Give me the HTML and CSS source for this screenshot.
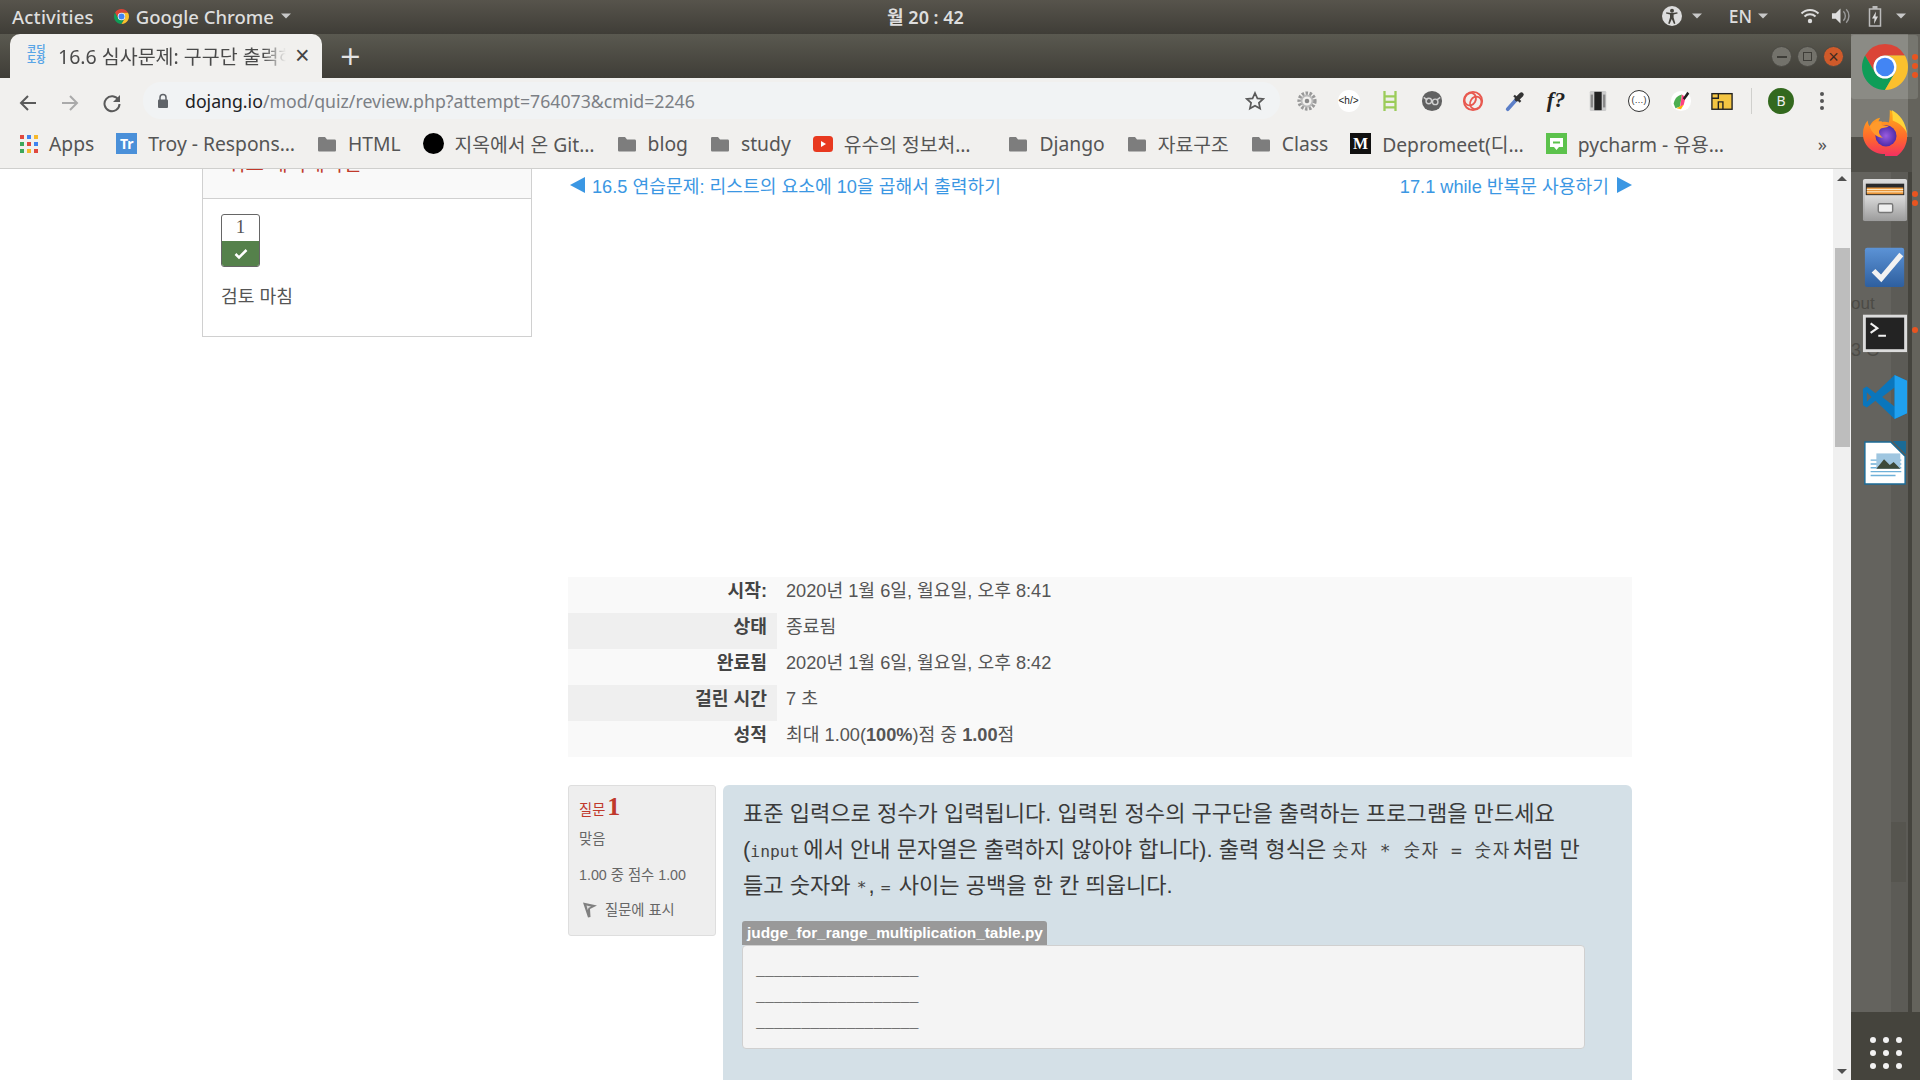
FILE: index.html
```html
<!DOCTYPE html>
<html lang="ko">
<head>
    <meta charset="UTF-8">
    <title>16.6 심사문제: 구구단 출력하기</title>
    <link rel="stylesheet" href="styles.css">
</head>
<body>

<svg class="defs" width="0" height="0">
    <symbol id="chrome" viewBox="4 4 40 40">
        <path fill="#db4437" d="M24 4A20 20 0 0 1 41.32 14H24A10 10 0 0 0 15.34 29L6.68 14A20 20 0 0 1 24 4Z"/>
        <path fill="#0f9d58" d="M6.68 14A20 20 0 0 0 24 44L32.66 29A10 10 0 0 1 15.34 29Z"/>
        <path fill="#fbc02d" d="M41.32 14A20 20 0 0 1 24 44L32.66 29A10 10 0 0 0 24 14Z"/>
        <circle cx="24" cy="24" r="10" fill="#fff"/>
        <circle cx="24" cy="24" r="8" fill="#4285f4"/>
    </symbol>
    <symbol id="folder" viewBox="0 0 20 18">
        <path fill="#7d7d7d" d="M1 3.500C1 2.400 1.600 2 2.500 2H8l2 2.500h7.500c1 0 1.500.6 1.500 1.500v9c0 1-.5 1.500-1.500 1.500h-15C1.500 16.500 1 16 1 15Z"/>
    </symbol>
    <symbol id="caret" viewBox="0 0 10 6">
        <path fill="currentColor" d="M0 .5h10L5 5.500Z"/>
    </symbol>
</svg>

<header class="topbar">
    <div class="topbar-left">
        <span class="activities">Activities</span>
        <span class="app-menu">
            <svg class="app-chrome"><use href="#chrome"/></svg>
            Google Chrome
            <svg class="caret"><use href="#caret"/></svg>
        </span>
    </div>
    <div class="clock">월 20 : 42</div>
    <div class="tray">
        <svg class="tray-access" viewBox="0 0 20 20"><circle cx="10" cy="10" r="10" fill="#ddd"/><circle cx="10" cy="4.800" r="2" fill="#44423c"/><path fill="#44423c" d="M4 7.500l4 1v3l-1.800 6 1.400.5 2.200-5 2.200 5 1.400-.5-1.800-6v-3l4-1-.3-1.300-4.500.8H8.800l-4.500-.8Z"/></svg>
        <svg class="caret tray-caret-a"><use href="#caret"/></svg>
        <span class="lang">EN</span>
        <svg class="caret tray-caret-b"><use href="#caret"/></svg>
        <svg class="tray-wifi" viewBox="0 0 20 16"><path fill="none" stroke="#ddd" stroke-width="2" d="M1.500 5.500a12 12 0 0 1 17 0M4.500 8.500a8 8 0 0 1 11 0"/><circle cx="10" cy="13" r="2.200" fill="#ddd"/></svg>
        <svg class="tray-vol" viewBox="0 0 20 18"><path fill="#ddd" d="M1 6h4l5-5v16l-5-5H1Z"/><path fill="none" stroke="#999" stroke-width="1.500" d="M13 4a7 7 0 0 1 0 10M16 2a10 10 0 0 1 0 14"/></svg>
        <svg class="tray-batt" viewBox="0 0 14 22"><path fill="none" stroke="#bbb" stroke-width="1.500" d="M1.500 4h11v17h-11Z"/><path fill="#bbb" d="M4.500 1h5v3h-5Z"/><path fill="#ddd" d="M8 6.500l-4 7h2.500L6 19l4-7.500H7.500Z"/></svg>
        <svg class="caret tray-caret-c"><use href="#caret"/></svg>
    </div>
</header>

<div class="workspace">
    <div class="window">
        <div class="tabstrip">
            <div class="tab">
                <span class="favicon">코딩<br>도장</span>
                <span class="tab-title">16.6 심사문제: 구구단 출력하기</span>
                <span class="tab-close">×</span>
            </div>
            <span class="tab-new">+</span>
            <div class="win-buttons">
                <span class="win-btn"><i class="win-min"></i></span>
                <span class="win-btn"><i class="win-max"></i></span>
                <span class="win-btn win-close">×</span>
            </div>
        </div>

        <div class="toolbar">
            <svg class="nav-icon" viewBox="0 0 20 20"><path fill="none" stroke="#5a5a5a" stroke-width="2" d="M18 10H3M10 3l-7 7 7 7"/></svg>
            <svg class="nav-icon" viewBox="0 0 20 20"><path fill="none" stroke="#aaa" stroke-width="2" d="M2 10h15M10 3l7 7-7 7"/></svg>
            <svg class="nav-icon" viewBox="0 0 20 20"><path fill="none" stroke="#5a5a5a" stroke-width="2" d="M16.500 7A7.500 7.500 0 1 0 17.500 11"/><path fill="#5a5a5a" d="M18 2v7h-7Z"/></svg>
            <div class="omnibox">
                <svg class="lock" viewBox="0 0 12 16"><path fill="none" stroke="#5f6368" stroke-width="1.500" d="M3 7V4.500a3 3 0 0 1 6 0V7"/><rect x="1" y="6.500" width="10" height="8.500" rx="1" fill="#5f6368"/></svg>
                <span class="url"><b>dojang.io</b>/mod/quiz/review.php?attempt=764073&amp;cmid=2246</span>
                <svg class="star" viewBox="0 0 20 20"><path fill="none" stroke="#5a5a5a" stroke-width="1.700" d="M10 2l2.400 5.400 5.800.6-4.300 3.900 1.200 5.700L10 14.700l-5.100 2.900 1.200-5.700L1.800 8l5.800-.6Z"/></svg>
            </div>
            <div class="extensions">
                <svg viewBox="0 0 24 24"><circle cx="12" cy="12" r="8" fill="none" stroke="#999" stroke-width="5" stroke-dasharray="2.500 1.500"/><circle cx="12" cy="12" r="6" fill="none" stroke="#bbb" stroke-width="2"/><circle cx="12" cy="12" r="2.500" fill="#888"/></svg>
                <span class="ext-ch">&lt;h/&gt;</span>
                <svg viewBox="0 0 24 24"><path fill="none" stroke="#9ccc5a" stroke-width="2.500" d="M6 1v22M18 1v22M6 7h12M6 13h12M6 19h12"/></svg>
                <svg viewBox="0 0 24 24"><circle cx="12" cy="12" r="11" fill="#616161"/><path fill="none" stroke="#d0d0d0" stroke-width="1.500" d="M3 8l4 3M21 8l-4 3"/><circle cx="8.500" cy="12" r="3" fill="none" stroke="#d0d0d0" stroke-width="1.500"/><circle cx="15.500" cy="13" r="3" fill="none" stroke="#d0d0d0" stroke-width="1.500"/></svg>
                <svg viewBox="0 0 24 24"><g fill="none" stroke="#e8594f" stroke-width="2"><circle cx="12" cy="12" r="10"/><ellipse cx="9" cy="10" rx="6" ry="7" transform="rotate(30 9 10)"/><ellipse cx="15" cy="14" rx="6" ry="7" transform="rotate(30 15 14)"/></g></svg>
                <svg viewBox="0 0 24 24"><path stroke="#5c7fc8" stroke-width="4" stroke-linecap="round" d="M4 21L13 11"/><path stroke="#333" stroke-width="5" stroke-linecap="round" d="M14 10L19 5"/><path stroke="#333" stroke-width="2.500" d="M11 6l7 7"/></svg>
                <span class="ext-f">f?</span>
                <svg viewBox="0 0 24 24"><rect x="3" y="1" width="18" height="22" rx="1.500" fill="#ccc"/><rect x="8" y="2" width="8" height="20" fill="#222"/><rect x="4" y="5" width="2.500" height="14" fill="#888"/><rect x="17.500" y="5" width="2.500" height="14" fill="#888"/></svg>
                <span class="ext-dots">(…)</span>
                <svg viewBox="0 0 24 24"><circle cx="12" cy="12" r="11" fill="#fff"/><path fill="#4caf50" d="M4 15C5 9 9 6 13 5l-2 13-5 2Z"/><path fill="#ff4081" d="M11 19L13 5l4 3-2 8Z"/><path fill="#ffb300" d="M7 20l8-4-3 5Z"/><path fill="#222" d="M14 9l5-7 2 2-5 7Z"/></svg>
                <svg viewBox="0 0 24 24"><rect x="1" y="4" width="22" height="17" fill="#f4c542" stroke="#222" stroke-width="1.500"/><path fill="none" stroke="#222" stroke-width="1.500" d="M1 9h7V4M8 21v-8h5v8"/></svg>
            </div>
            <i class="tool-sep"></i>
            <span class="avatar">B</span>
            <span class="kebab"><i></i><i></i><i></i></span>
        </div>

        <div class="bookmarks">
            <span class="bm">
                <span class="apps-grid"><i class="c-r"></i><i class="c-b"></i><i class="c-y"></i><i class="c-g"></i><i class="c-r"></i><i class="c-b"></i><i class="c-g"></i><i class="c-y"></i><i class="c-r"></i></span>
                Apps
            </span>
            <span class="bm"><span class="bm-tr">Tr</span>Troy - Respons…</span>
            <span class="bm"><svg class="bm-folder"><use href="#folder"/></svg>HTML</span>
            <span class="bm"><i class="bm-circle"></i>지옥에서 온 Git…</span>
            <span class="bm"><svg class="bm-folder"><use href="#folder"/></svg>blog</span>
            <span class="bm"><svg class="bm-folder"><use href="#folder"/></svg>study</span>
            <span class="bm bm-wide">
                <svg class="bm-yt" viewBox="0 0 20 16"><rect width="20" height="16" rx="3.500" fill="#e8391f"/><path fill="#fff" d="M8 5l5 3-5 3Z"/></svg>
                유수의 정보처…
            </span>
            <span class="bm"><svg class="bm-folder"><use href="#folder"/></svg>Django</span>
            <span class="bm"><svg class="bm-folder"><use href="#folder"/></svg>자료구조</span>
            <span class="bm"><svg class="bm-folder"><use href="#folder"/></svg>Class</span>
            <span class="bm"><span class="bm-m">M</span>Depromeet(디…</span>
            <span class="bm">
                <svg class="bm-blog" viewBox="0 0 21 21"><rect width="21" height="21" fill="#5cc24c"/><path fill="#fff" d="M4 5h13v9h-4l-2.500 3-2.500-3H4Z"/><rect x="7" y="8.500" width="7" height="2" fill="#5cc24c"/></svg>
                pycharm - 유용…
            </span>
            <span class="bm-more">»</span>
        </div>

        <div class="page">
            <div class="page-body">
                <aside class="quiz-nav">
                    <div class="quiz-nav-head">퀴즈 네비게이션</div>
                    <div class="quiz-nav-body">
                        <div class="qn-button">
                            <span class="qn-num">1</span>
                            <span class="qn-state"><svg viewBox="0 0 14 12"><path fill="none" stroke="#fff" stroke-width="2.500" d="M1.500 6l3.500 3.500 7.500-7.500"/></svg></span>
                        </div>
                        <p class="qn-finish">검토 마침</p>
                    </div>
                </aside>

                <main class="content">
                    <nav class="lesson-nav">
                        <a class="lesson-link"><i class="tri-left"></i>16.5 연습문제: 리스트의 요소에 10을 곱해서 출력하기</a>
                        <a class="lesson-link">17.1 while 반복문 사용하기<i class="tri-right"></i></a>
                    </nav>

                    <table class="summary">
                        <tr><th>시작:</th><td>2020년 1월 6일, 월요일, 오후 8:41</td></tr>
                        <tr class="alt"><th>상태</th><td>종료됨</td></tr>
                        <tr><th>완료됨</th><td>2020년 1월 6일, 월요일, 오후 8:42</td></tr>
                        <tr class="alt"><th>걸린 시간</th><td>7 초</td></tr>
                        <tr><th>성적</th><td>최대 1.00(<b>100%</b>)점 중 <b>1.00</b>점</td></tr>
                    </table>

                    <section class="question">
                        <div class="q-info">
                            <h3 class="q-no">질문 <span>1</span></h3>
                            <div class="q-line">맞음</div>
                            <div class="q-line">1.00 중 점수 1.00</div>
                            <div class="q-flag">
                                <svg viewBox="0 0 16 18"><path fill="#808080" d="M1 2.500l14 3-7 3.500.5 8-2.500.5Z"/><path fill="#ddd" d="M4.500 5.500l4.500 1-2.500 1.500-.8 2Z"/></svg>
                                질문에 표시
                            </div>
                        </div>
                        <div class="q-content">
                            <p class="q-text">표준 입력으로 정수가 입력됩니다. 입력된 정수의 구구단을 출력하는 프로그램을 만드세요 (<code>input</code>에서 안내 문자열은 출력하지 않아야 합니다). 출력 형식은 <code class="code-ko">숫자 * 숫자 = 숫자</code>처럼 만들고 숫자와 <code class="code-sign">*</code>, <code class="code-sign">=</code> 사이는 공백을 한 칸 띄웁니다.</p>
                            <div class="code-label">judge_for_range_multiplication_table.py</div>
                            <pre class="code-box">__________________
__________________
__________________</pre>
                        </div>
                    </section>
                </main>
            </div>

            <div class="scrollbar">
                <i class="sb-up"></i>
                <i class="sb-thumb"></i>
                <i class="sb-down"></i>
            </div>
        </div>
    </div>

    <div class="dock">
        <div class="dock-ghost">
            <span class="ghost-out">out</span>
            <span class="ghost-3">3 O</span>
            <i class="ghost-scroll"></i>
        </div>
        <i class="dock-active"></i>
        <span class="pip pip-c1"></span><span class="pip pip-c2"></span><span class="pip pip-c3"></span>
        <span class="pip pip-f1"></span><span class="pip pip-f2"></span>
        <span class="pip pip-t1"></span>

        <div class="dock-items">
            <svg class="dock-icon"><use href="#chrome"/></svg>

            <svg class="dock-icon" viewBox="0 1 48 48">
                <defs>
                    <linearGradient id="ffBody" x1="0" y1="0" x2="0" y2="1"><stop offset="0" stop-color="#ffb31a"/><stop offset=".55" stop-color="#ff6a2b"/><stop offset="1" stop-color="#f0246c"/></linearGradient>
                    <radialGradient id="ffGlobe"><stop offset="0" stop-color="#9a5ce0"/><stop offset="1" stop-color="#4e2ca8"/></radialGradient>
                </defs>
                <path fill="url(#ffBody)" d="M24 47C10 47 1 37 1 26c0-6 2-11 5-14 0 3 1 5 2 6 2-5 6-8 11-9-2 3-2 5-1 6 3-2 7-2 10-1 1-4 1-9 1-13 8 4 17 13 18 26 1 14-10 26-23 26Z"/>
                <path fill="#ffd43a" d="M31 1c8 4 15 13 16 25-2-6-7-11-15-14 0-4 0-7-1-11Z"/>
                <circle cx="25" cy="28" r="11" fill="url(#ffGlobe)"/>
                <path fill="#ff9a2b" d="M8 18c3-4 8-6 13-5-1 2-1 3 0 4l7 1c-3 2-7 1-9 3-3 3 0 7 3 9-6 0-12-5-14-12Z"/>
            </svg>

            <svg class="dock-icon" viewBox="0 -2 48 48">
                <defs><linearGradient id="cab" x1="0" y1="0" x2="0" y2="1"><stop offset="0" stop-color="#dcdcdc"/><stop offset="1" stop-color="#9b9b9b"/></linearGradient></defs>
                <rect x="1" y="1" width="46" height="44" rx="2" fill="url(#cab)"/>
                <rect x="4" y="6" width="40" height="14" fill="#2a2a2a"/>
                <rect x="5" y="10" width="38" height="7" fill="#e9963a"/>
                <path stroke="#fff3d8" d="M5 12h38M5 14.500h38"/>
                <rect x="3" y="18" width="42" height="27" fill="url(#cab)"/>
                <rect x="17" y="27" width="15" height="9" rx="1.500" fill="#efefef" stroke="#777" stroke-width="1.500"/>
            </svg>

            <svg class="dock-icon" viewBox="0 -3 48 48">
                <defs><linearGradient id="tasks" x1="0" y1="0" x2="0" y2="1"><stop offset="0" stop-color="#5c93d6"/><stop offset="1" stop-color="#2e5f9f"/></linearGradient></defs>
                <rect x="3" y="3" width="41" height="41" rx="2.500" fill="url(#tasks)"/>
                <path fill="none" stroke="#f2f2f2" stroke-width="5.500" d="M12 27l8 8L41 10"/>
            </svg>

            <svg class="dock-icon" viewBox="0 -4 48 48">
                <rect x="1" y="3" width="46" height="39" fill="#dcdcdc"/>
                <rect x="4" y="6" width="40" height="33" fill="#232323"/>
                <path fill="none" stroke="#f2f2f2" stroke-width="2.200" d="M9 12l7 5-7 5M17 25h8"/>
            </svg>

            <svg class="dock-icon" viewBox="0 0 48 48">
                <path fill="#0a76bd" d="M34 1L14 20 5 13 1 15.500v17L5 35l9-7 20 19 13-6V7ZM34 14v20l-13-10ZM5 19l5 5-5 5Z"/>
                <path fill="#1fa0ef" d="M34 1l13 6v34l-13 6Z"/>
            </svg>

            <svg class="dock-icon" viewBox="0 0 48 48">
                <path fill="#fff" stroke="#1b6b96" stroke-width="1.500" d="M3 2h27l15 15v29H3Z"/>
                <path fill="#1b6b96" d="M32 1h14v14Z"/>
                <path stroke="#6eb0d8" stroke-width="1.500" d="M9 21h32M9 25h32M9 29h32M9 33h32M9 37h26"/>
                <rect x="15" y="14" width="25" height="16" fill="#9fc6e0"/>
                <path fill="#3d4a3a" d="M15 30l8-10 6 6 4-3 7 7Z"/>
            </svg>
        </div>

        <div class="dock-foot">
            <div class="show-apps"><i></i><i></i><i></i><i></i><i></i><i></i><i></i><i></i><i></i></div>
        </div>
    </div>
</div>

</body>
</html>
```

FILE: styles.css
```css
* {
    box-sizing: border-box;
}

html, body {
    margin: 0;
    height: 100%;
    overflow: hidden;
}

body {
    font-family: 'Liberation Sans', 'Noto Sans CJK KR', sans-serif;
    color: #444;
    background-color: #fff;
}

.defs {
    position: absolute;
}

.caret {
    width: 10px;
    height: 6px;
    color: #c8c8c8;
}

/* top bar */
.topbar {
    height: 34px;
    display: grid;
    grid-template-columns: 1fr auto 1fr;
    align-items: center;
    padding-right: 69px;
    padding-bottom: 2px;
    background: linear-gradient(#57544c, #3f3d37);
    color: #dedede;
    font-family: 'Noto Sans', 'Noto Sans CJK KR', sans-serif;
    font-size: 18.500px;
    font-weight: 500;
}

.topbar-left {
    display: flex;
    align-items: center;
    padding-left: 12px;
}

.activities {
    margin-right: 20px;
    letter-spacing: 0.2px;
}

.app-menu {
    display: flex;
    align-items: center;
}

.app-chrome {
    width: 15px;
    height: 15px;
    margin-right: 7px;
}

.app-menu .caret {
    margin-left: 7px;
}

.clock {
    font-size: 18px;
    font-weight: 600;
}

.tray {
    display: flex;
    align-items: center;
    justify-content: flex-end;
    margin-right: -69px;
    padding-right: 14px;
}

.tray-access {
    width: 20px;
    height: 20px;
}

.tray-caret-a {
    margin-left: 10px;
}

.lang {
    margin-left: 27px;
    font-size: 17.500px;
}

.tray-caret-b {
    margin-left: 6px;
}

.tray-wifi {
    width: 20px;
    height: 16px;
    margin-left: 32px;
}

.tray-vol {
    width: 19px;
    height: 18px;
    margin-left: 11px;
}

.tray-batt {
    width: 14px;
    height: 22px;
    margin-left: 18px;
}

.tray-caret-c {
    margin-left: 14px;
}

/* window */
.workspace {
    display: flex;
    height: 1046px;
}

.window {
    width: 1851px;
    display: flex;
    flex-direction: column;
}

.tabstrip {
    height: 44px;
    display: flex;
    align-items: flex-end;
    padding-left: 10px;
    background: linear-gradient(#5a5950, #3f3d37);
}

.tab {
    width: 312px;
    height: 44px;
    display: flex;
    align-items: center;
    padding-left: 17px;
    padding-bottom: 2px;
    background-color: #f1f0ee;
    border-radius: 10px 10px 0 0;
}

.favicon {
    width: 20px;
    font-size: 10px;
    line-height: 10px;
    font-weight: 700;
    color: #5aa5e6;
    margin-right: 11px;
}

.tab-title {
    width: 228px;
    white-space: nowrap;
    overflow: hidden;
    font-size: 19.500px;
    color: #4a4a4a;
    font-family: 'Noto Sans', 'Noto Sans CJK KR', sans-serif;
    -webkit-mask-image: linear-gradient(to right, #000 90%, transparent);
    mask-image: linear-gradient(to right, #000 90%, transparent);
}

.tab-close {
    margin-left: 9px;
    font-size: 25px;
    color: #444;
}

.tab-new {
    align-self: center;
    margin-left: 17px;
    font-size: 27px;
    line-height: 30px;
    color: #e4e4e4;
    font-family: 'DejaVu Sans', sans-serif;
}

.win-buttons {
    margin-left: auto;
    margin-right: 7px;
    margin-bottom: 11px;
    display: flex;
    gap: 5px;
}

.win-btn {
    width: 21px;
    height: 21px;
    border-radius: 50%;
    display: flex;
    align-items: center;
    justify-content: center;
    background-color: #73726b;
    border: 1px solid #4a4943;
}

.win-min {
    width: 10px;
    height: 2px;
    background-color: #3e3d38;
}

.win-max {
    width: 9px;
    height: 9px;
    border: 1px solid #3e3d38;
}

.win-close {
    background-color: #cf5a2a;
    color: #3e2a20;
    font-size: 18px;
    line-height: 18px;
}

.toolbar {
    height: 50px;
    display: flex;
    align-items: center;
    padding-left: 18px;
    background-color: #f1f0ee;
}

.nav-icon {
    width: 20px;
    height: 20px;
    margin-right: 22px;
}

.omnibox {
    width: 1137px;
    height: 37px;
    margin-left: -1px;
    margin-top: -5px;
    display: flex;
    align-items: center;
    padding-left: 14px;
    padding-right: 15px;
    background-color: #f1f3f4;
    border-radius: 18px;
}

.lock {
    width: 12px;
    height: 16px;
    margin-right: 16px;
}

.url {
    font-family: 'Noto Sans', sans-serif;
    font-size: 17.700px;
    color: #7c8085;
}

.url b {
    font-weight: 400;
    color: #202124;
}

.star {
    width: 20px;
    height: 20px;
    margin-left: auto;
}

.extensions {
    display: flex;
    align-items: center;
    gap: 19.500px;
    margin-left: 16px;
    margin-top: -5px;
}

.extensions svg,
.extensions span {
    width: 22px;
    height: 22px;
    flex: none;
}

.ext-ch {
    background-color: #fff;
    border-radius: 50%;
    color: #222;
    font-size: 10px;
    line-height: 22px;
    text-align: center;
    white-space: nowrap;
}

.ext-f {
    font-family: 'Liberation Serif', serif;
    font-style: italic;
    font-weight: 700;
    font-size: 22px;
    line-height: 20px;
    color: #222;
    text-align: center;
}

.ext-dots {
    border: 1.500px solid #333;
    border-radius: 50%;
    font-size: 9px;
    line-height: 18px;
    text-align: center;
    color: #333;
    background-color: #fff;
}

.tool-sep {
    width: 1px;
    height: 26px;
    margin-left: 18px;
    margin-top: -5px;
    background-color: #d0d0cd;
}

.avatar {
    width: 26px;
    height: 26px;
    margin-left: 16px;
    margin-top: -5px;
    border-radius: 50%;
    background-color: #33691e;
    color: #eee;
    font-family: 'Noto Sans', sans-serif;
    font-size: 14px;
    line-height: 26px;
    text-align: center;
}

.kebab {
    margin-left: 26px;
    margin-top: -5px;
    display: flex;
    flex-direction: column;
    gap: 3px;
}

.kebab i {
    width: 4px;
    height: 4px;
    border-radius: 50%;
    background-color: #555;
}

/* bookmarks */
.bookmarks {
    height: 41px;
    display: flex;
    align-items: center;
    gap: 22px;
    padding-left: 20px;
    padding-bottom: 9px;
    background-color: #f1f0ee;
    border-bottom: 1px solid #cfcfcd;
    font-family: 'Noto Sans', 'Noto Sans CJK KR', sans-serif;
    font-size: 19.300px;
    color: #555;
    white-space: nowrap;
}

.bm {
    display: flex;
    align-items: center;
    gap: 11px;
}

.bm-wide {
    margin-right: 16px;
}

.apps-grid {
    width: 18px;
    height: 18px;
    display: grid;
    grid-template-columns: repeat(3, 4px);
    gap: 3px;
}

.apps-grid i {
    width: 4px;
    height: 4px;
}

.c-r { background-color: #e0493f; }
.c-b { background-color: #3f82ef; }
.c-y { background-color: #f7b92b; }
.c-g { background-color: #3da75a; }

.bm-tr {
    width: 21px;
    height: 21px;
    background-color: #4a90d9;
    color: #fff;
    font-weight: 700;
    font-size: 14px;
    line-height: 21px;
    text-align: center;
}

.bm-folder {
    width: 20px;
    height: 18px;
}

.bm-circle {
    width: 21px;
    height: 21px;
    border-radius: 50%;
    background-color: #000;
}

.bm-yt {
    width: 20px;
    height: 16px;
}

.bm-m {
    width: 21px;
    height: 21px;
    background-color: #111;
    color: #fff;
    font-family: 'Liberation Serif', serif;
    font-weight: 700;
    font-size: 16px;
    line-height: 21px;
    text-align: center;
}

.bm-blog {
    width: 21px;
    height: 21px;
}

.bm-more {
    margin-left: auto;
    margin-right: 24px;
    font-size: 18px;
}

/* page */
.page {
    flex: 1;
    min-height: 0;
    display: flex;
    overflow: hidden;
    background-color: #fff;
}

.page-body {
    width: 1833px;
    display: flex;
    align-items: flex-start;
    padding-left: 202px;
}

.scrollbar {
    width: 18px;
    position: relative;
    background-color: #f0f0f0;
}

.sb-thumb {
    position: absolute;
    left: 2px;
    top: 79px;
    width: 15px;
    height: 199px;
    background-color: #bdbdbd;
}

.sb-up,
.sb-down {
    position: absolute;
    left: 4px;
    border-left: 5px solid transparent;
    border-right: 5px solid transparent;
}

.sb-up {
    top: 7px;
    border-bottom: 5px solid #505050;
}

.sb-down {
    bottom: 6px;
    border-top: 5px solid #505050;
}

.quiz-nav {
    width: 330px;
    flex: none;
    margin-top: -36px;
    border: 1px solid #d0d0d0;
    border-top: 0;
}

.quiz-nav-head {
    height: 66px;
    padding: 21px 0 0 24px;
    background-color: #f9f9f9;
    border-bottom: 1px solid #d0d0d0;
    color: #c0392b;
    font-size: 20px;
    line-height: 20px;
}

.quiz-nav-body {
    padding: 15px 0 0 18px;
    height: 137px;
}

.qn-button {
    width: 39px;
    height: 53px;
    border: 1px solid #666;
    border-radius: 3px;
    overflow: hidden;
}

.qn-num {
    display: block;
    height: 26px;
    text-align: center;
    font-family: 'Liberation Serif', serif;
    font-size: 19px;
    line-height: 24px;
    color: #555;
}

.qn-state {
    height: 26px;
    display: flex;
    align-items: center;
    justify-content: center;
    background-color: #55814b;
}

.qn-state svg {
    width: 14px;
    height: 12px;
}

.qn-finish {
    margin: 18px 0 0;
    font-size: 18.200px;
    line-height: 24px;
    color: #555;
}

.content {
    width: 1064px;
    flex: none;
    margin-left: 36px;
}

.lesson-nav {
    height: 32px;
    display: flex;
    justify-content: space-between;
    align-items: center;
}

.lesson-link {
    display: flex;
    align-items: center;
    font-size: 18.200px;
    color: #3b97e3;
}

.tri-left {
    margin: 0 7px 0 2px;
    border-top: 8px solid transparent;
    border-bottom: 8px solid transparent;
    border-right: 15px solid #3b97e3;
}

.tri-right {
    margin-left: 8px;
    border-top: 8px solid transparent;
    border-bottom: 8px solid transparent;
    border-left: 15px solid #3b97e3;
}

.summary {
    width: 1064px;
    margin-top: 376px;
    border-collapse: collapse;
    font-size: 18.200px;
    line-height: 28px;
    color: #555;
    background-color: #f9f9f9;
}

.summary th,
.summary td {
    height: 36px;
    padding: 0 0 8px 9px;
    vertical-align: top;
}

.summary th {
    width: 209px;
    padding-left: 0;
    padding-right: 10px;
    text-align: right;
    color: #444;
}

.summary .alt th {
    background-color: #efefef;
}

.question {
    display: flex;
    align-items: flex-start;
    gap: 7px;
    margin-top: 28px;
}

.q-info {
    width: 148px;
    height: 151px;
    flex: none;
    padding: 6px 10px;
    background-color: #eee;
    border: 1px solid #dedede;
    border-radius: 3px;
    font-size: 14.300px;
    color: #666;
}

.q-no {
    margin: 0;
    height: 28px;
    color: #c0392b;
    font-size: 14.300px;
    font-weight: 400;
}

.q-no span {
    margin-left: -2px;
    font-family: 'Liberation Serif', serif;
    font-size: 26px;
    font-weight: 700;
}

.q-line {
    margin-top: 5px;
    line-height: 28px;
}

.q-line + .q-line {
    margin-top: 8px;
}

.q-flag {
    display: flex;
    align-items: center;
    gap: 7px;
    margin-top: 9px;
    padding-left: 3px;
}

.q-flag svg {
    width: 16px;
    height: 18px;
}

.q-content {
    width: 909px;
    height: 300px;
    flex: none;
    padding: 11px 20px 0;
    background-color: #d4e0e7;
    border-radius: 6px;
}

.q-text {
    width: 843px;
    margin: 0;
    font-size: 22.050px;
    line-height: 36px;
    color: #3a3a3a;
}

.q-text code {
    margin-right: 4px;
    font-family: 'DejaVu Sans Mono', 'Noto Sans CJK KR', monospace;
    font-size: 16.300px;
    line-height: 20px;
    color: #444;
}

.q-text .code-ko {
    font-size: 18px;
    letter-spacing: 1.500px;
    word-spacing: -1px;
    margin-right: 2px;
}

.q-text .code-sign {
    margin-right: 2px;
}

.code-label {
    width: 305px;
    height: 24px;
    margin-top: 17px;
    margin-left: -1px;
    padding-left: 5px;
    background-color: #999;
    border-radius: 3px 3px 0 0;
    color: #fff;
    font-size: 15.400px;
    font-weight: 700;
    line-height: 24px;
    white-space: nowrap;
}

.code-box {
    width: 843px;
    height: 104px;
    margin: 0 0 0 -1px;
    padding: 9px 13px 0;
    background-color: #f4f4f4;
    border: 1px solid #d0d0d0;
    border-radius: 4px;
    font-family: 'DejaVu Sans Mono', monospace;
    font-size: 15px;
    line-height: 26px;
    color: #000;
}

/* dock */
.dock {
    width: 69px;
    position: relative;
    overflow: hidden;
    background: linear-gradient(to right, #7c7b75 0 57px, #64635c 57px);
}

.dock-ghost {
    position: absolute;
    left: 0;
    top: 103px;
    width: 61px;
    height: 875px;
    background: linear-gradient(to right, #64635e 0 40px, #5c5b56 40px 57px, #45443e 57px);
    border-top: 35px solid #504f49;
    color: #4c4b46;
}

.ghost-out {
    position: absolute;
    left: 0;
    top: 122px;
    font-size: 17px;
}

.ghost-3 {
    position: absolute;
    left: 0;
    top: 168px;
    font-size: 18px;
}

.ghost-scroll {
    position: absolute;
    left: 40px;
    top: 650px;
    width: 15px;
    height: 60px;
    background-color: #56554f;
}

.dock-active {
    position: absolute;
    left: 0;
    top: 1px;
    width: 67px;
    height: 64px;
    border-radius: 3px;
    background-color: rgba(255, 255, 255, 0.12);
}

.pip {
    position: absolute;
    left: 61px;
    width: 6px;
    height: 6px;
    border-radius: 50%;
    background-color: #e95420;
}

.pip-c1 { top: 20px; }
.pip-c2 { top: 29px; }
.pip-c3 { top: 38px; }
.pip-f1 { top: 157px; }
.pip-f2 { top: 166px; }
.pip-t1 { top: 293px; }

.dock-items {
    position: relative;
    display: flex;
    flex-direction: column;
    align-items: center;
    gap: 20px;
    padding-top: 10px;
    width: 69px;
    padding-right: 1px;
}

.dock-icon {
    width: 46px;
    height: 46px;
    flex: none;
}

.dock-foot {
    position: absolute;
    left: 0;
    bottom: 0;
    width: 100%;
    height: 68px;
    background-color: #45443d;
}

.show-apps {
    display: grid;
    grid-template-columns: repeat(3, 6px);
    gap: 7px 7px;
    margin: 25px 0 0 19px;
}

.show-apps i {
    width: 6px;
    height: 6px;
    border-radius: 50%;
    background-color: #f2f2f2;
}
```
